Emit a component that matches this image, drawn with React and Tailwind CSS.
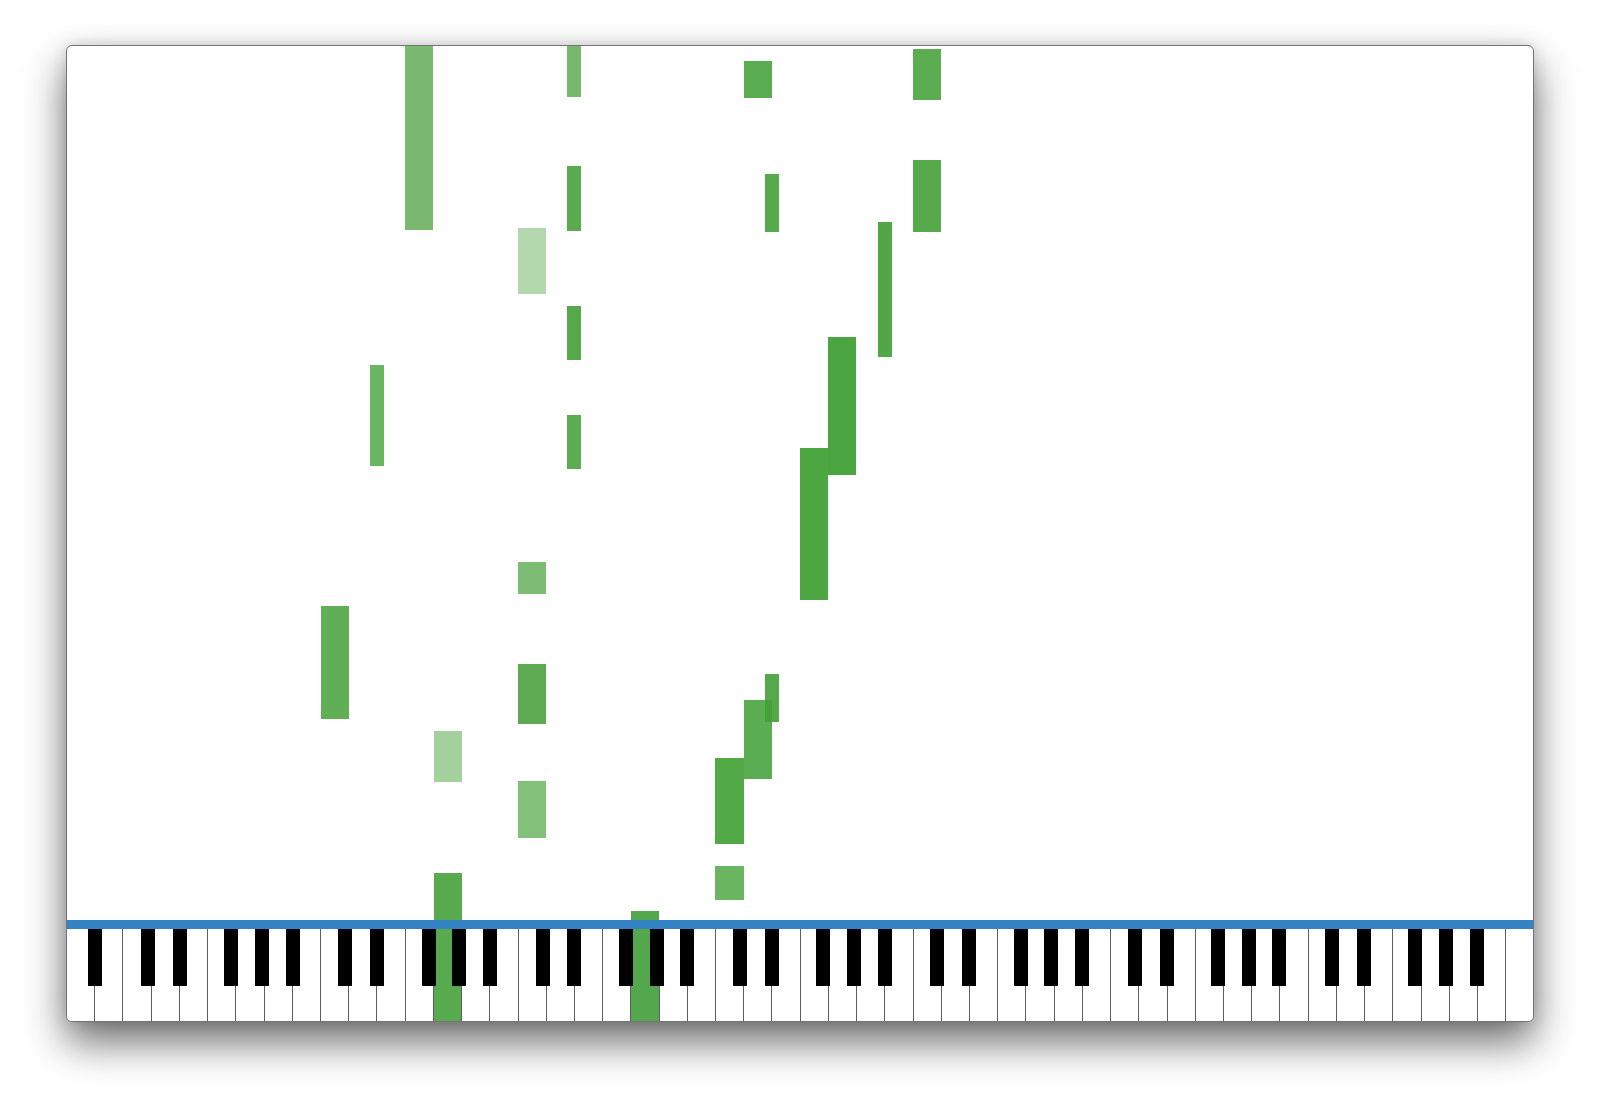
import React from 'react';

const KEY_W = 1466 / 52;

// white key index (0 = A0) or black key line (line between white keys)
const notes = [
  { w: 12, top: 0, h: 184, c: 'bg-[#7ab870]' },
  { b: 18, top: 0, h: 51, c: 'bg-[#78b86e]' },
  { w: 24, top: 15, h: 37, c: 'bg-[#5aac50]' },
  { w: 30, top: 3, h: 51, c: 'bg-[#5cad52]' },
  { w: 30, top: 114, h: 72, c: 'bg-[#57aa4c]' },
  { b: 18, top: 120, h: 65, c: 'bg-[#5aab50]' },
  { b: 25, top: 128, h: 58, c: 'bg-[#55ab4a]' },
  { w: 16, top: 182, h: 66, c: 'bg-[#b4d8ae]' },
  { b: 29, top: 176, h: 135, c: 'bg-[#4fa845]' },
  { b: 18, top: 260, h: 54, c: 'bg-[#55a94b]' },
  { w: 27, top: 291, h: 138, c: 'bg-[#4aa43f]' },
  { b: 11, top: 319, h: 101, c: 'bg-[#6ab561]' },
  { b: 18, top: 369, h: 54, c: 'bg-[#5aad50]' },
  { w: 26, top: 402, h: 152, c: 'bg-[#4ca743]' },
  { w: 16, top: 516, h: 32, c: 'bg-[#7dbc74]' },
  { w: 9, top: 560, h: 113, c: 'bg-[#60ae56]' },
  { w: 16, top: 618, h: 60, c: 'bg-[#5daa53]' },
  { w: 24, top: 654, h: 79, c: 'bg-[#5bad51]' },
  { b: 25, top: 628, h: 48, c: 'bg-[#43a036]/90' },
  { w: 23, top: 712, h: 86, c: 'bg-[#52aa47]' },
  { w: 13, top: 685, h: 51, c: 'bg-[#a3d09c]' },
  { w: 16, top: 735, h: 57, c: 'bg-[#83c07a]' },
  { w: 23, top: 820, h: 34, c: 'bg-[#6ab560]' },
  { w: 13, top: 827, h: 60, c: 'bg-[#58aa4e]' },
  { w: 20, top: 865, h: 20, c: 'bg-[#52a84a]' },
];

const activeKeys = { 13: 'bg-[#58aa4e]', 20: 'bg-[#52a84a]' };

// black keys: [line, offset px]
const blackKeys = [[1, 0]];
for (let o = 0; o < 7; o++) {
  const base = 2 + o * 7;
  blackKeys.push([base + 1, -3.5], [base + 2, 0], [base + 4, -5], [base + 5, -2.5], [base + 6, 0]);
}

function noteBox(n) {
  if (n.w !== undefined) return { left: n.w * KEY_W, width: KEY_W };
  return { left: n.b * KEY_W - 7, width: 14 };
}

export default function App() {
  return (
    <div className="w-[1600px] h-[1111px] bg-white pt-[45px] pl-[66px]">
      <div className="w-[1468px] h-[977px] flex flex-col bg-white border border-[#747474] rounded-[6px] overflow-hidden shadow-[0_20px_42px_rgba(0,0,0,0.58),0_0_14px_rgba(0,0,0,0.12)]">
        {/* falling notes */}
        <div className="relative flex-1 overflow-hidden">
          {notes.map((n, i) => {
            const box = noteBox(n);
            return (
              <div
                key={i}
                className={`absolute ${n.c}`}
                style={{ left: box.left, width: box.width, top: n.top, height: n.h }}
              />
            );
          })}
        </div>

        <div className="h-[9px] bg-[#3282c4] shrink-0" />

        {/* keyboard */}
        <div className="relative h-[92px] shrink-0 flex">
          {Array.from({ length: 52 }).map((_, i) => (
            <div
              key={i}
              className={`flex-1 ${activeKeys[i] || 'bg-white'} ${i < 51 ? 'border-r-[1.5px] border-[#5e5e5e]' : ''}`}
            />
          ))}
          {blackKeys.map(([line, off], i) => (
            <div
              key={i}
              className="absolute top-0 h-[57px] w-[14px] bg-black"
              style={{ left: line * KEY_W + off - 7 }}
            />
          ))}
        </div>
      </div>
    </div>
  );
}
